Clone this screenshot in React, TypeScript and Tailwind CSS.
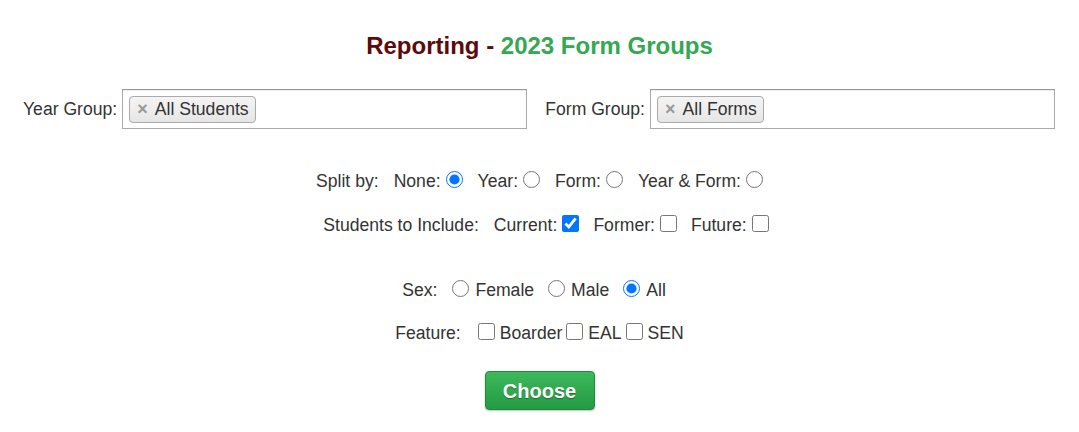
import React, { useState } from 'react';

function Tag({ label }: { label: string }) {
  return (
    <span className="flex items-center h-[27px] pl-[7px] pr-[6px] bg-gradient-to-b from-[#f4f4f4] to-[#e6e6e6] border border-[#aaa] rounded-[4px] text-[#333]">
      <span className="text-[#999] font-bold text-[18px] mr-[7px] leading-none">×</span>
      {label}
    </span>
  );
}

function SelectBox({ label, tag }: { label: string; tag: string }) {
  return (
    <div className="flex items-center">
      <span className="mr-[5px]">{label}</span>
      <div className="w-[405px] h-[40px] border border-[#aaa] border-t-[#999] bg-white flex items-center px-[6px] shadow-[inset_0_1px_1px_rgba(0,0,0,0.08)]">
        <Tag label={tag} />
      </div>
    </div>
  );
}

export default function App() {
  const [split, setSplit] = useState('none');
  const [sex, setSex] = useState('all');

  return (
    <div className="w-[1079px] h-[432px] bg-white text-[#333] text-[17.6px] font-['Liberation_Sans',Arial,sans-serif]">
      <h1 className="text-center text-[24px] font-bold pt-[32px] leading-[28px]">
        <span className="text-[#5c0a0a]">Reporting - </span>
        <span className="text-[#34a853]">2023 Form Groups</span>
      </h1>

      {/* Group pickers */}
      <div className="flex mt-[29px] pl-[23px] gap-[18px]">
        <SelectBox label="Year Group:" tag="All Students" />
        <SelectBox label="Form Group:" tag="All Forms" />
      </div>

      {/* Split by */}
      <div className="flex justify-center items-center mt-[41px] h-[22px]">
        <span className="mr-[15px]">Split by:</span>
        {[
          ['none', 'None:'],
          ['year', 'Year:'],
          ['form', 'Form:'],
          ['both', 'Year & Form:'],
        ].map(([k, l]) => (
          <label key={k} className="flex items-center mr-[15px] last:mr-0">
            {l}
            <input
              type="radio"
              name="split"
              className="ml-[5px] w-[17px] h-[17px] mb-[4px]"
              checked={split === k}
              onChange={() => setSplit(k)}
            />
          </label>
        ))}
      </div>

      {/* Students to include */}
      <div className="flex justify-center items-center mt-[22px] h-[22px] pl-[13px]">
        <span className="mr-[15px]">Students to Include:</span>
        {[
          ['Current:', true],
          ['Former:', false],
          ['Future:', false],
        ].map(([l, c]) => (
          <label key={l as string} className="flex items-center mr-[14px] last:mr-0">
            {l}
            <input
              type="checkbox"
              defaultChecked={c as boolean}
              className="ml-[5px] w-[17px] h-[17px] mb-[4px]"
            />
          </label>
        ))}
      </div>

      {/* Sex */}
      <div className="flex justify-center items-center mt-[43px] h-[22px] pr-[11px]">
        <span className="mr-[15px]">Sex:</span>
        {[
          ['female', 'Female'],
          ['male', 'Male'],
          ['all', 'All'],
        ].map(([k, l]) => (
          <label key={k} className="flex items-center mr-[14px] last:mr-0">
            <input
              type="radio"
              name="sex"
              className="mr-[6px] w-[17px] h-[17px] mb-[4px]"
              checked={sex === k}
              onChange={() => setSex(k)}
            />
            {l}
          </label>
        ))}
      </div>

      {/* Feature */}
      <div className="flex justify-center items-center mt-[21px] h-[22px]">
        <span className="mr-[13px]">Feature:</span>
        {['Boarder', 'EAL', 'SEN'].map((l) => (
          <label key={l} className="flex items-center">
            <input type="checkbox" className="ml-[4px] mr-[5px] w-[17px] h-[17px] mb-[4px]" />
            {l}
          </label>
        ))}
      </div>

      <div className="flex justify-center mt-[27px]">
        <button className="w-[110px] h-[39px] rounded-[4px] border border-[#1e8a3e] bg-gradient-to-b from-[#3cb95b] to-[#249a44] text-white font-bold text-[20px] [text-shadow:0_1px_1px_rgba(0,0,0,0.35)] shadow-[0_1px_2px_rgba(0,0,0,0.25)]">
          Choose
        </button>
      </div>
    </div>
  );
}
